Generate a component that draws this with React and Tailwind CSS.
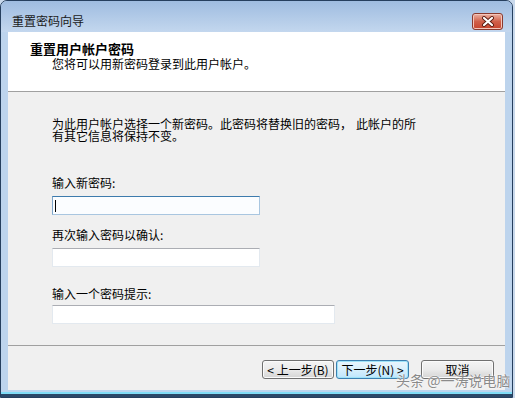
import React from "react";

function Btn({ children, def, w }) {
  return (
    <div
      className={
        "h-[19px] rounded-[3px] border flex items-center justify-center text-[12px] leading-[12px] text-black " +
        (def
          ? "border-[#3c7fb1] bg-gradient-to-b from-[#eaf6fd] via-[#d9f0fc] to-[#bee6fd] shadow-[inset_0_0_0_1px_#9fe3f8]"
          : "border-[#707070] bg-gradient-to-b from-[#f4f4f4] via-[#ebebeb] to-[#d4d4d4] shadow-[inset_0_0_0_1px_#fbfbfb]") +
        " " +
        w
      }
    >
      {children}
    </div>
  );
}

export default function App() {
  return (
    <div
      className="relative w-[515px] h-[398px] bg-[#c9d9ec] overflow-hidden"
      style={{ fontFamily: '"Noto Sans CJK SC", "Noto Sans", sans-serif' }}
    >
      <div className="w-[513px] h-[398px] flex flex-col border border-[#263f5e] rounded-t-[7px] bg-[#bdd4ed] overflow-hidden">
        {/* title bar */}
        <div className="h-[31px] flex items-start bg-gradient-to-b from-[#9fbce0] to-[#c3d7ee]">
          <div className="pl-[11px] pt-[14px] text-[12px] leading-[12px] text-[#1a1a1a]">重置密码向导</div>
          <div className="ml-auto mt-[12px] mr-[9px] w-[31px] h-[17px] rounded-[3px] border border-[#8a3a2e] bg-gradient-to-b from-[#eab1a3] via-[#d0604a] to-[#c7432d] flex items-center justify-center shadow-[inset_0_0_0_1px_#f3c6bb]">
            <svg width="14" height="11" viewBox="0 0 14 11">
              <path d="M3 2 L11 9 M11 2 L3 9" stroke="#5b1d12" strokeWidth="4" strokeLinecap="round" />
              <path d="M3 2 L11 9 M11 2 L3 9" stroke="#ffffff" strokeWidth="2.2" strokeLinecap="round" />
            </svg>
          </div>
        </div>
        {/* middle */}
        <div className="flex-1 flex px-[7px]">
          <div className="flex-1 flex flex-col bg-[#f0f0f0]">
            {/* header */}
            <div className="h-[60px] bg-white border-b border-[#a0a0a0] flex flex-col">
              <div className="pl-[22px] pt-[10px] text-[13px] leading-[14px] font-bold text-black">重置用户帐户密码</div>
              <div className="pl-[44px] pt-[1px] text-[12px] leading-[13px] text-black">您将可以用新密码登录到此用户帐户。</div>
            </div>
            {/* body */}
            <div className="h-[253px] flex flex-col pl-[44px] pt-[26px] text-[12px] leading-[12px] text-black">
              <div className="whitespace-nowrap h-[12px]">
                为此用户帐户选择一个新密码。此密码将替换旧的密码，<span className="inline-block w-[4px]" />此帐户的所
              </div>
              <div className="whitespace-nowrap h-[12px]">有其它信息将保持不变。</div>
              <div className="mt-[35px]">输入新密码:</div>
              <div className="mt-[7px] w-[208px] h-[19px] border border-[#a9c6e0] border-t-[#3d7bad] border-l-[#7ea5c9] bg-[#fbfdff] flex items-center pl-[2px]">
                <div className="w-[1px] h-[12px] bg-black" />
              </div>
              <div className="mt-[14px]">再次输入密码以确认:</div>
              <div className="mt-[7px] w-[208px] h-[19px] border border-[#e3e9ef] border-t-[#abadb3] bg-white" />
              <div className="mt-[21px]">输入一个密码提示:</div>
              <div className="mt-[5px] w-[283px] h-[19px] border border-[#e3e9ef] border-t-[#abadb3] bg-white" />
            </div>
            {/* footer */}
            <div className="flex-1 border-t border-[#a0a0a0] flex items-start justify-end pr-[11px] pt-[14px]">
              <Btn w="w-[72px]">&lt; 上一步(B)</Btn>
              <div className="w-[2px]" />
              <Btn def w="w-[73px]">下一步(N) &gt;</Btn>
              <div className="w-[12px]" />
              <Btn w="w-[73px]">取消</Btn>
            </div>
          </div>
        </div>
        {/* bottom frame */}
        <div className="h-[7px] flex flex-col">
          <div className="h-[2px] bg-[#bdd4ed]" />
          <div className="h-[2px] bg-[#7fdcf6]" />
          <div className="flex-1 bg-[#2a4868]" />
        </div>
      </div>
      <div className="absolute left-[396px] top-[372px] text-[14px] leading-[16px] text-[#8a8a8a] whitespace-nowrap [text-shadow:0_0_2px_#ffffff,0_0_1px_#ffffff]">
        头条 @一涛说电脑
      </div>
    </div>
  );
}
